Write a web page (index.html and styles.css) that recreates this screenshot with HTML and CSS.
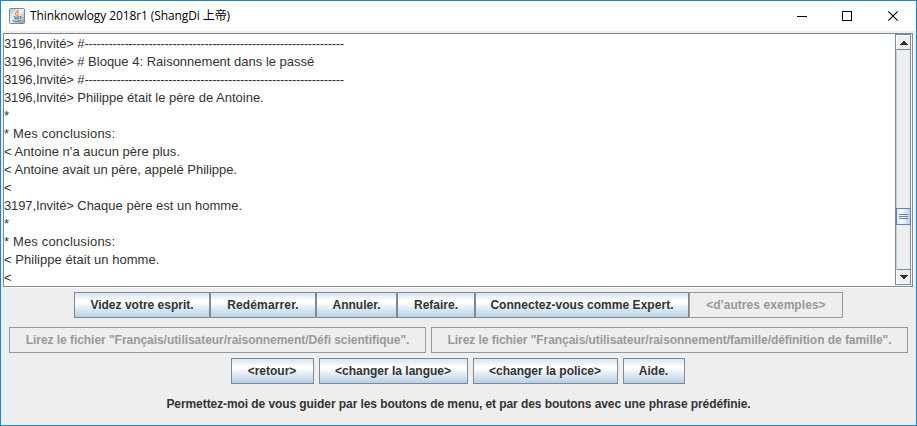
FILE: index.html
```html
<!DOCTYPE html>
<html lang="fr">
<head>
<meta charset="utf-8">
<title>Thinknowlogy 2018r1</title>
<link rel="stylesheet" href="styles.css">
</head>
<body>
<div class="window">
  <header class="titlebar">
    <svg class="logo" width="16" height="16" viewBox="0 0 16 16">
      <defs><linearGradient id="tile" x1="0" y1="0" x2="1" y2="1"><stop offset="0" stop-color="#aebcc9"/><stop offset=".45" stop-color="#f4f7f9"/><stop offset="1" stop-color="#8097aa"/></linearGradient></defs>
      <rect x=".5" y=".5" width="15" height="15" rx="1" fill="url(#tile)" stroke="#71889c"/>
      <path d="M8.8 1.8C9.5 4 5.8 4.4 6.5 6.2L7.6 8M10 4.2C7.3 5.3 9.8 6 8.4 7.8" fill="none" stroke="#ee8129" stroke-width="1.1"/>
      <path d="M4.500 8.700Q7 9.700 10.500 8.700M5.200 10.500Q7.500 11.300 9.800 10.500M3.500 12.600Q7.500 14.400 12 12.600M11 8.700Q13.500 8.500 11 10.800" fill="none" stroke="#43677f"/>
    </svg>
    <h1 class="title">Thinknowlogy 2018r1 (ShangDi 上帝)</h1>
    <svg class="controls" width="102" height="12" viewBox="0 0 102 12" fill="none" stroke="#000">
      <path d="M0 6.5H10M45.5 1.5H54.5V10.5H45.5Z" shape-rendering="crispEdges"/>
      <path d="M91.3 1.300L100.700 10.700M100.700 1.300L91.300 10.700" stroke-width="1.1"/>
    </svg>
  </header>
  <main class="pane">
    <div class="output">
      <p><span class="prompt">3196,Invité&gt; </span>#<span class="rule">-----------------------------------------------------------------</span></p>
      <p><span class="prompt">3196,Invité&gt; </span># Bloque 4: Raisonnement dans le passé</p>
      <p><span class="prompt">3196,Invité&gt; </span>#<span class="rule">-----------------------------------------------------------------</span></p>
      <p><span class="prompt">3196,Invité&gt; </span>Philippe était le père de Antoine.</p>
      <p>*</p>
      <p class="heading">* Mes conclusions:</p>
      <p class="answer">&lt; Antoine n'a aucun père plus.</p>
      <p>&lt; Antoine avait un père, appelé Philippe.</p>
      <p>&lt;</p>
      <p><span class="prompt">3197,Invité&gt; </span>Chaque père est un homme.</p>
      <p>*</p>
      <p class="heading">* Mes conclusions:</p>
      <p class="answer">&lt; Philippe était un homme.</p>
      <p>&lt;</p>
    </div>
    <div class="scrollbar">
      <div class="arrow up"><svg width="8" height="4" viewBox="0 0 8 4" shape-rendering="crispEdges"><path d="M3 0h2v1h1v1h1v1h1v1H0V3h1V2h1V1h1z"/></svg></div>
      <div class="track"><div class="thumb"><i></i><i></i><i></i></div></div>
      <div class="arrow down"><svg width="8" height="4" viewBox="0 0 8 4" shape-rendering="crispEdges"><path d="M0 0h8v1H7v1H6v1H5v1H3V3H2V2H1V1H0z"/></svg></div>
    </div>
  </main>
  <div class="row joined">
    <button class="b-clear">Videz votre esprit.</button><button class="b-restart">Redémarrer.</button><button class="b-undo">Annuler.</button><button class="b-redo">Refaire.</button><button class="b-expert">Connectez-vous comme Expert.</button><button class="b-more" disabled>&lt;d'autres exemples&gt;</button>
  </div>
  <div class="row files">
    <button class="b-science" disabled>Lirez le fichier "Français/utilisateur/raisonnement/Défi scientifique".</button>
    <button class="b-family" disabled>Lirez le fichier "Français/utilisateur/raisonnement/famille/définition de famille".</button>
  </div>
  <div class="row last">
    <button class="b-back">&lt;retour&gt;</button>
    <button class="b-lang">&lt;changer la langue&gt;</button>
    <button class="b-font">&lt;changer la police&gt;</button>
    <button class="b-help">Aide.</button>
  </div>
  <p class="hint">Permettez-moi de vous guider par les boutons de menu, et par des boutons avec une phrase prédéfinie.</p>
</div>
</body>
</html>
```
FILE: styles.css
```css
* { box-sizing: border-box; }
body { margin: 0; font-family: "Liberation Sans", Arial, sans-serif; color: #333; }
p { margin: 0; }
.window { width: 917px; height: 426px; border: 1px solid #1883d7; background: #eee; overflow: hidden; }
.titlebar { height: 30px; display: flex; align-items: center; background: #fff; padding: 0 17px 0 8px; }
.logo { margin-top: -1px; }
.title { margin: 0 auto 0 5px; font: 12px/16px "Open Sans", "Noto Sans CJK SC", sans-serif; color: #000; letter-spacing: -.1px; white-space: nowrap; }
.pane { display: flex; height: 254px; margin: 2px 3px 0 2px; padding: 0 1px 1px 0; border: 1px solid #7a8a99; box-shadow: 1px 1px #fff; background: #fff; }
.output { flex: 1; padding: 1px 0 0; font-size: 13px; line-height: 18px; overflow: hidden; white-space: nowrap; }
.prompt { letter-spacing: -.12px; }
.rule { letter-spacing: -.34px; }
.heading { letter-spacing: .16px; }
.answer { letter-spacing: .04px; }
.scrollbar { width: 16px; display: flex; flex-direction: column; border: 1px solid #7a8a99; background: #eee; }
.arrow { height: 15px; display: flex; align-items: center; justify-content: center; border: 1px solid #fff; border-right: 0; }
.arrow path { fill: #333; }
.up { border-bottom-color: #7a8a99; }
.down { border-top-color: #7a8a99; }
.track { flex: 1; padding-top: 158px; border-left: 1px solid #b8cfe5; }
.thumb { height: 17px; margin: 0 -1px; display: flex; flex-direction: column; align-items: center; justify-content: center; gap: 1px; border: 1px solid #6382bf; background: linear-gradient(90deg, #d5e3f0, #fff 35%, #b8cfe5); }
.thumb i { width: 9px; height: 1px; background: #6382bf; }
.row { display: flex; justify-content: center; gap: 5px; height: 26px; margin-top: 5px; }
.joined { gap: 0; }
.files { margin-top: 9px; }
.last { padding-right: 2px; }
button { height: 26px; padding: 0; border: 1px solid #7a8a99; border-radius: 0; background: linear-gradient(#dde8f3 1px, #fff 8px, #fff 9px, #b8cfe5); font: bold 12px/24px "Liberation Sans", Arial, sans-serif; color: #333; white-space: nowrap; }
button:disabled { border-color: #999; background: #eee; color: #999; }
.b-clear { width: 136px; }
.b-restart { width: 106px; letter-spacing: .15px; }
.b-undo { width: 81px; }
.b-redo { width: 78px; }
.b-expert { width: 214px; letter-spacing: .04px; }
.b-more { width: 154px; letter-spacing: .06px; }
.b-science { width: 417px; letter-spacing: -.045px; }
.b-family { width: 477px; letter-spacing: -.05px; }
.b-back { width: 83px; }
.b-lang { width: 149px; }
.b-font { width: 145px; }
.b-help { width: 62px; }
.hint { margin-top: 12px; text-align: center; font-size: 12px; line-height: 16px; font-weight: bold; letter-spacing: -.08px; }
```
